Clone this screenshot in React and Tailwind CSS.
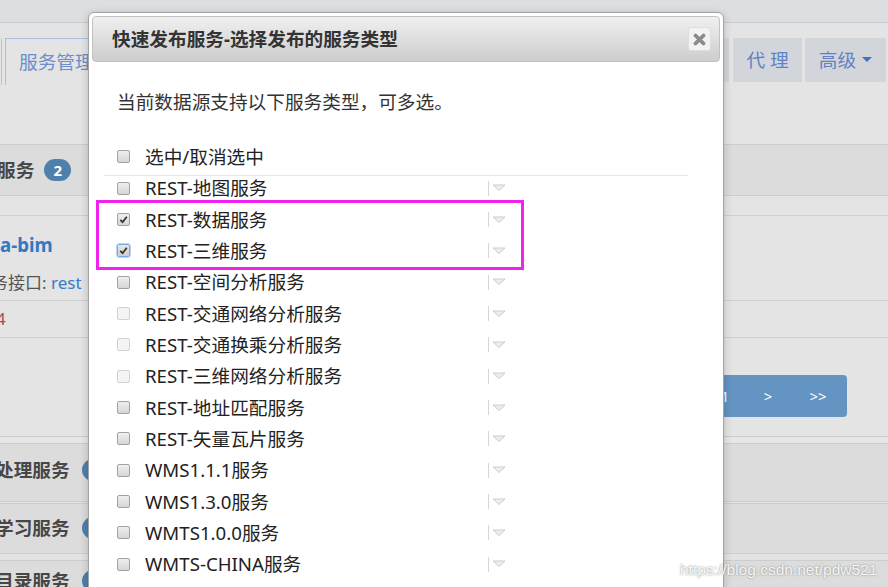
import React from 'react';
import clsx from 'clsx';

const services = [
  { label: 'REST-地图服务' },
  { label: 'REST-数据服务', checked: true },
  { label: 'REST-三维服务', checked: true, focus: true },
  { label: 'REST-空间分析服务' },
  { label: 'REST-交通网络分析服务', disabled: true },
  { label: 'REST-交通换乘分析服务', disabled: true },
  { label: 'REST-三维网络分析服务', disabled: true },
  { label: 'REST-地址匹配服务' },
  { label: 'REST-矢量瓦片服务' },
  { label: 'WMS1.1.1服务' },
  { label: 'WMS1.3.0服务' },
  { label: 'WMTS1.0.0服务' },
  { label: 'WMTS-CHINA服务' },
];

const Checkbox = ({ checked, focus, disabled }) => (
  <span
    className={clsx(
      'flex h-[13px] w-[13px] shrink-0 items-center justify-center rounded-[2px] border',
      disabled && 'border-[#d2d2d2] bg-[#f4f4f4]',
      !disabled && focus && 'border-[#78aaea] bg-linear-to-b from-[#e6e6e6] to-[#cfcfcf] outline outline-[#b9d4f5]',
      !disabled && !focus && 'border-[#a2a2a2] bg-linear-to-b from-[#efefef] to-[#d6d6d6]'
    )}
  >
    {checked && (
      <svg width="9" height="9" viewBox="0 0 9 9">
        <path d="M1.3 4.8 L3.6 7.2 L7.8 1.8" fill="none" stroke="#333" strokeWidth="1.8" />
      </svg>
    )}
  </span>
);

const Marker = () => (
  <span className="flex items-center gap-[3px]">
    <span className="h-[15px] w-px bg-[#d6d6d6]" />
    <svg width="14" height="8" viewBox="0 0 14 8">
      <path d="M1 1 L13 1 L7 6.5 Z" fill="#eeeeee" stroke="#cdcdcd" strokeWidth="1" />
    </svg>
  </span>
);

const SectionTitle = ({ text, shift, badge }) => (
  <div className="flex items-center">
    <span className={clsx('text-[18.67px] font-bold text-[#474747]', shift)}>{text}</span>
    {badge ? (
      <span className="ml-[10px] flex h-[22px] w-[27px] items-center justify-center rounded-full bg-[#4f80ab] text-[15px] font-bold text-white">
        {badge}
      </span>
    ) : (
      <span className="ml-[12px] h-[22px] w-[27px] rounded-full bg-[#4f80ab]" />
    )}
  </div>
);

export default function App() {
  return (
    <div className="relative h-[587px] w-[888px] overflow-hidden bg-[#e4e4e4] font-['Noto_Sans','Noto_Sans_CJK_SC',sans-serif] leading-[24px] text-[#333]">
      {/* background page (dimmed) */}
      <div className="h-[23px] border-b border-[#c6ccd5] bg-[#dddee0]" />

      <div className="mt-[15px] flex h-[47px]">
        <div className="w-[2px] border-r border-[#b3c6de]" />
        <div className="ml-[3px] flex w-[120px] items-center border border-b-0 border-[#a9c1df] pl-[13px] text-[18.67px] text-[#6c8ecb]">
          服务管理
        </div>
        <div className="flex-1" />
        <div className="h-[44px] w-[6px] bg-[#d3d7dc]" />
        <div className="ml-[4px] flex h-[44px] w-[69px] items-center justify-center bg-[#d2d6db] text-[18.67px] text-[#5f81c5]">
          代 理
        </div>
        <div className="ml-[3px] flex h-[44px] w-[81px] items-center justify-center gap-[6px] bg-[#d2d6db] text-[18.67px] text-[#5f81c5]">
          高级
          <svg width="10" height="6" viewBox="0 0 10 6">
            <path d="M0 0 L10 0 L5 5 Z" fill="#3f72c2" />
          </svg>
        </div>
        <div className="w-[2px]" />
      </div>

      <div className="mt-[59px] flex h-[52px] items-center border-y border-[#cdcdcd] bg-[#dcdcdc]">
        <SectionTitle text="服务" shift="-ml-[3px]" badge="2" />
      </div>
      <div className="h-[20px] border-b border-[#d0d0d0]" />
      <div className="h-[85px] border-b border-[#d0d0d0] pt-[17px]">
        <div className="h-[24px] text-[18.67px] font-bold text-[#3378c1]">a-bim</div>
        <div className="mt-[14px] -ml-[9px] h-[24px] text-[17px] text-[#555]">
          务接口: <span className="text-[#3a7bc8]">rest</span>
        </div>
      </div>
      <div className="h-[37px] border-b border-[#d0d0d0] pt-[6px]">
        <span className="-ml-[4px] block text-[17px] text-[#b04a4a]">4</span>
      </div>
      <div className="h-[99px] border-b border-[#cdcdcd] pt-[37px]">
        <div className="flex justify-end pr-[41px]">
          <div className="flex h-[42px] items-center rounded-r-[4px] bg-[#6394c2] text-[15px] text-white">
            <span className="w-[44px] text-center">&lt;</span>
            <span className="w-[44px] text-center">1</span>
            <span className="w-[42px] text-center">&gt;</span>
            <span className="w-[58px] text-center">&gt;&gt;</span>
          </div>
        </div>
      </div>
      <div className="h-[7px] border-b border-[#cdcdcd] bg-[#e7e7e7]" />
      <div className="flex h-[58px] items-center border-b border-[#cdcdcd] bg-[#dcdcdc] pb-[6px]">
        <SectionTitle text="处理服务" shift="-ml-[5px]" />
      </div>
      <div className="h-px bg-[#e2e2e2]" />
      <div className="flex h-[51px] items-center border-y border-[#cdcdcd] bg-[#dcdcdc] pb-[2px]">
        <SectionTitle text="学习服务" shift="-ml-[5px]" />
      </div>
      <div className="h-[7px] border-b border-[#cdcdcd] bg-[#e3e3e3]" />
      <div className="flex h-[60px] items-start bg-[#dcdcdc] pt-[8px]">
        <SectionTitle text="目录服务" shift="-ml-[5px]" />
      </div>

      {/* modal dialog */}
      <div className="absolute left-[88px] top-[12px] h-[600px] w-[636px] rounded-[6px] border border-[#a3a3a3] bg-white p-[3px] shadow-[0_2px_8px_rgba(0,0,0,0.2)]">
        <div className="flex h-[46px] items-center justify-between rounded-[4px] border border-[#c2c2c2] bg-linear-to-b from-[#f0f0f0] to-[#cdcdcd] pl-[19px] pr-[8px]">
          <span className="text-[18.67px] font-bold text-[#333]">快速发布服务-选择发布的服务类型</span>
          <span className="flex h-[24px] w-[23px] items-center justify-center rounded-[3px] border border-[#dedede] bg-[#f2f2f2]">
            <svg width="13" height="13" viewBox="0 0 13 13">
              <path d="M2.5 2.5 L10.5 10.5 M10.5 2.5 L2.5 10.5" stroke="#8a8a8a" strokeWidth="3.8" strokeLinecap="round" />
            </svg>
          </span>
        </div>

        <div className="mt-[28px] pl-[25px] text-[18.67px] text-[#333]">当前数据源支持以下服务类型，可多选。</div>

        <div className="ml-[12px] mt-[27.33px] w-[584px] text-[18.67px] text-[#222]">
          <div className="flex h-[31.33px] items-center gap-[15px] pl-[13px]">
            <Checkbox />
            <span>选中/取消选中</span>
          </div>
          <div className="-mb-[3px] mt-[2px] h-px bg-[#e6e6e6]" />
          {services.map((s) => (
            <div key={s.label} className="flex h-[31.33px] items-center pl-[13px]">
              <Checkbox checked={s.checked} focus={s.focus} disabled={s.disabled} />
              <span className="ml-[15px] w-[343px]">{s.label}</span>
              <Marker />
            </div>
          ))}
        </div>
      </div>

      {/* annotation box */}
      <div className="absolute left-[96px] top-[200px] h-[70px] w-[428px] border-[3px] border-[#ef22ee]" />

      {/* watermark */}
      <div className="absolute left-[680px] top-[558px] font-['Liberation_Sans',sans-serif] text-[15.5px] text-white/90 [text-shadow:0_0_2px_#777]">
        https://blog.csdn.net/pdw521
      </div>
    </div>
  );
}
